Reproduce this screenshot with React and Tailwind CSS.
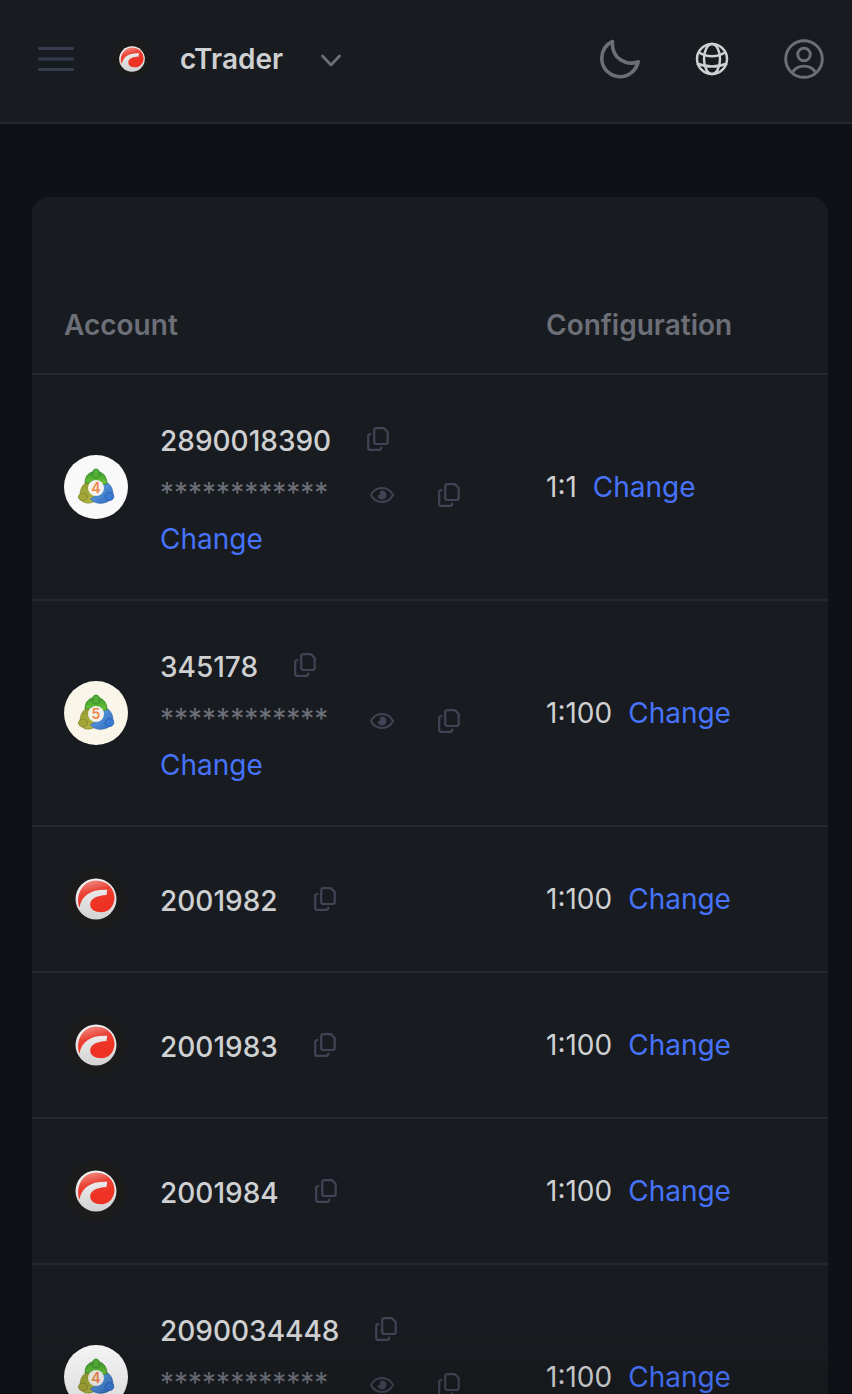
import React from "react";

const accounts = [
  { id: "2890018390", platform: "mt4", leverage: "1:1" },
  { id: "345178", platform: "mt5", leverage: "1:100" },
  { id: "2001982", platform: "ctrader", leverage: "1:100" },
  { id: "2001983", platform: "ctrader", leverage: "1:100" },
  { id: "2001984", platform: "ctrader", leverage: "1:100" },
  { id: "2090034448", platform: "mt4", leverage: "1:100" },
];

function CopyIcon() {
  return (
    <svg className="size-6" viewBox="0 0 24 24" fill="none" stroke="currentColor" strokeWidth="2.200" strokeLinecap="round" strokeLinejoin="round" aria-hidden="true">
      <path d="M9.500 1.100h7.300l3.900 3.900v9.700a2.300 2.300 0 0 1-2.300 2.300H9.500a2.300 2.300 0 0 1-2.300-2.300V3.400A2.300 2.300 0 0 1 9.500 1.100Z" />
      <path d="M3.500 7a2.300 2.300 0 0 0-2.300 2.300V20.900a2 2 0 0 0 2 2H12a2.300 2.300 0 0 0 2.300-2.300" />
    </svg>
  );
}

function EyeIcon() {
  return (
    <svg className="size-6" viewBox="0 0 24 24" fill="none" aria-hidden="true">
      <path d="M1 12c2.200-4.400 6.200-7 11-7s8.800 2.600 11 7c-2.200 4.400-6.200 7-11 7S3.200 16.400 1 12Z" stroke="currentColor" strokeWidth="2" strokeLinejoin="round" />
      <path d="M12 7.500a4.500 4.500 0 1 1-4.500 4.500c1.800.5 3-.3 2.500-1.800-.4-1.300.500-2.600 2-2.700Z" fill="currentColor" />
    </svg>
  );
}

function CTraderLogo({ className }) {
  return (
    <svg className={className} viewBox="0 0 64 64" aria-hidden="true">
      <defs>
        <linearGradient id="ct-silver" x1="0" y1="0" x2="0" y2="1">
          <stop offset="0" stopColor="#f4f4f4" />
          <stop offset="1" stopColor="#d2d2d2" />
        </linearGradient>
        <linearGradient id="ct-red" x1="0.300" y1="0" x2="0.500" y2="0.700">
          <stop offset="0" stopColor="#f08a80" />
          <stop offset="0.500" stopColor="#ea4336" />
          <stop offset="1" stopColor="#ee3223" />
        </linearGradient>
      </defs>
      <circle cx="32" cy="32" r="30" fill="#1b1b1b" />
      <circle cx="32" cy="32" r="20.500" fill="url(#ct-silver)" />
      <path d="M15.500 40.500C11 29 18 13.500 32 13.500c12 0 19 9 18.500 18.500-.8 8-6.500 13.300-13 13.300-6.800 0-11.300-3-11.300-7.500 0-6 6-9.200 16.300-9.700l.7-5.300C28 22 17.500 28 15.500 40.500Z" fill="url(#ct-red)" />
    </svg>
  );
}

function MetaTraderLogo({ version }) {
  return (
    <svg className="size-16 shrink-0" viewBox="0 0 64 64" aria-hidden="true">
      <defs>
        <linearGradient id="mt-green" x1="0" y1="0" x2="0" y2="1">
          <stop offset="0" stopColor="#3f9a2c" />
          <stop offset="1" stopColor="#6dc83c" />
        </linearGradient>
        <linearGradient id="mt-blue" x1="0" y1="0" x2="1" y2="1">
          <stop offset="0" stopColor="#6aaeea" />
          <stop offset="1" stopColor="#2f67bd" />
        </linearGradient>
        <linearGradient id="mt-olive" x1="0" y1="0" x2="0" y2="1">
          <stop offset="0" stopColor="#8f9a2c" />
          <stop offset="1" stopColor="#b2b544" />
        </linearGradient>
      </defs>
      <circle cx="32" cy="32" r="32" fill={version === "4" ? "#f9f9f9" : "#f9f6e9"} />
      <path d="M29 26.500c-9-1-13.500 6.500-13 15.500 1 6 9 8 15 4l3-6Z" fill="url(#mt-olive)" stroke="#858b2b" strokeWidth=".8" />
      <path d="M36 27c7-1.500 12.500 3 13 12 .5 8-15 13.500-22.500 5l7.500-5Z" fill="url(#mt-blue)" stroke="#3768b0" strokeWidth=".8" />
      <path d="M21 28c0-8 5-11.500 11-11.500S43 20.500 43 29l-4 .5c-4-5-10-5-14-1.500Z" fill="url(#mt-green)" stroke="#358226" strokeWidth=".8" />
      <ellipse cx="32" cy="18.500" rx="3.400" ry="4.500" fill="#54ad35" stroke="#2f8125" strokeWidth=".8" />
      <ellipse cx="19" cy="42" rx="4.500" ry="3.800" fill="#a6a638" stroke="#7e832a" strokeWidth=".8" />
      <ellipse cx="45.500" cy="41.500" rx="4.300" ry="4" fill="#397bd2" stroke="#2a5cab" strokeWidth=".8" />
      <circle cx="32" cy="33" r="8" fill="#f3f1ec" />
      <text x="32" y="38" textAnchor="middle" fontFamily="Inter, sans-serif" fontSize="14" fontWeight="600" fill="#ef8748">{version}</text>
    </svg>
  );
}

function PlatformLogo({ platform }) {
  if (platform === "ctrader") return <CTraderLogo className="size-16 shrink-0" />;
  return <MetaTraderLogo version={platform === "mt4" ? "4" : "5"} />;
}

function IconButton({ label, children }) {
  return (
    <button type="button" aria-label={label} className="text-[#404454]">
      {children}
    </button>
  );
}

function AccountRow({ account }) {
  const hasPassword = account.platform !== "ctrader";
  return (
    <tr className="border-b-2 border-[#25282d]">
      <td className="px-8 py-10">
        <div className="flex items-center gap-8">
          <PlatformLogo platform={account.platform} />
          <div>
            <div className="flex h-12 items-center gap-9">
              <span className="pt-1 font-medium">{account.id}</span>
              <IconButton label={"Copy account " + account.id}><CopyIcon /></IconButton>
            </div>
            {hasPassword && (
              <>
                <div className="flex h-14 items-center pt-2">
                  <span className="pb-1 text-[#6c6f78]">************</span>
                  <span className="ml-[42px] flex items-center gap-11">
                    <IconButton label="Show password"><EyeIcon /></IconButton>
                    <IconButton label="Copy password"><CopyIcon /></IconButton>
                  </span>
                </div>
                <a href="#password" className="block leading-10 text-[#4673fa]">Change</a>
              </>
            )}
          </div>
        </div>
      </td>
      <td className="px-8 py-10">
        <div className="flex gap-4">
          <span>{account.leverage}</span>
          <a href="#leverage" className="text-[#4673fa]">Change</a>
        </div>
      </td>
    </tr>
  );
}

export default function App() {
  return (
    <div className="relative flex h-screen flex-col overflow-hidden bg-[#0e1116] font-['Inter',sans-serif] text-[28px] leading-10 text-[#cfd0d2]">
      <header className="flex h-31 shrink-0 items-center justify-between border-b-2 border-[#25282d] bg-[#181b1f] pr-7 pb-1 pl-9">
        <div className="flex items-center">
          <button type="button" aria-label="Open menu" className="text-[#363d4e]">
            <svg className="size-10" viewBox="0 0 40 40" fill="none" stroke="currentColor" strokeWidth="3" strokeLinecap="round" aria-hidden="true">
              <path d="M3.500 9.500h33M3.500 20h33M3.500 30.500h33" />
            </svg>
          </button>
          <button type="button" className="ml-9 flex items-center font-semibold">
            <CTraderLogo className="size-10" />
            <span className="ml-7">cTrader</span>
            <svg className="ml-9 size-6 text-[#6c6f78]" viewBox="0 0 24 24" fill="none" stroke="currentColor" strokeWidth="2.800" strokeLinecap="round" strokeLinejoin="round" aria-hidden="true">
              <path d="m3.500 9 8.500 9 8.500-9" />
            </svg>
          </button>
        </div>
        <div className="flex items-center gap-13 text-[#6c6f78]">
          <button type="button" aria-label="Dark theme">
            <svg className="size-10" viewBox="0 0 40 40" fill="none" stroke="currentColor" strokeWidth="3.600" strokeLinejoin="round" aria-hidden="true">
              <path d="M12.500 2.500C5 6 1.800 12.500 1.800 19.500 1.800 29.500 10 37.700 20 37.700c8.500 0 16-6 18.200-15C27 27 11 20 12.500 2.500Z" />
            </svg>
          </button>
          <button type="button" aria-label="Language" className="text-[#cfd0d2]">
            <svg className="size-10" viewBox="0 0 40 40" fill="none" stroke="currentColor" strokeWidth="2.500" aria-hidden="true">
              <circle cx="20" cy="20" r="15" />
              <ellipse cx="20" cy="20" rx="8" ry="15" />
              <path d="M7 13.500c8 5 18 5 26 0M5 24.500c9 4 21 4 30 0" />
            </svg>
          </button>
          <button type="button" aria-label="Profile">
            <svg className="size-10" viewBox="0 0 40 40" fill="none" stroke="currentColor" strokeWidth="2.900" aria-hidden="true">
              <circle cx="20" cy="20" r="18.300" />
              <circle cx="20" cy="15.500" r="6.300" />
              <path d="M8.500 33.500C13 25 27 25 31.500 33.500" />
            </svg>
          </button>
        </div>
      </header>
      <main className="min-h-0 flex-1 overflow-y-auto pt-[73px] pr-6 pl-8 [scrollbar-width:none]">
        <div className="overflow-hidden rounded-2xl bg-[#181b1f] pt-20">
          <table className="w-full border-collapse text-left">
            <thead className="text-[#6c6f78]">
              <tr className="border-b-2 border-[#25282d]">
                <th scope="col" className="w-[482px] px-8 py-7 font-semibold">Account</th>
                <th scope="col" className="px-8 py-7 font-semibold">Configuration</th>
              </tr>
            </thead>
            <tbody>
              {accounts.map((account) => <AccountRow key={account.id} account={account} />)}
            </tbody>
          </table>
        </div>
      </main>
      <div className="pointer-events-none absolute inset-x-0 bottom-0 h-16 bg-linear-to-t from-black/10 to-transparent" />
    </div>
  );
}
